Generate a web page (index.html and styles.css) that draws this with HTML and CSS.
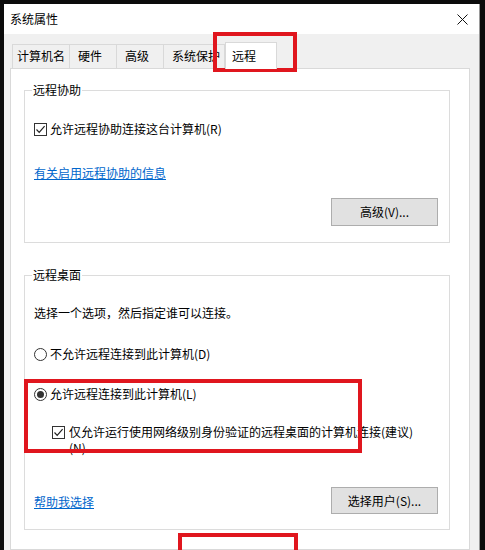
FILE: index.html
```html
<!DOCTYPE html>
<html lang="zh-CN">
<head>
<meta charset="utf-8">
<title>系统属性</title>
<link rel="stylesheet" href="styles.css">
</head>
<body>
<div class="window">
  <div class="titlebar">
    <span class="title">系统属性</span>
    <svg class="close" width="11" height="11" viewBox="0 0 11 11"><path d="M0.5 0.5 L10.5 10.5 M10.5 0.5 L0.5 10.5" stroke="#111" stroke-width="1" fill="none"/></svg>
  </div>
  <div class="dialog">
    <div class="tabs">
      <div class="tab tab-first">计算机名</div>
      <div class="tab">硬件</div>
      <div class="tab">高级</div>
      <div class="tab tab-wide">系统保护</div>
      <div class="tab tab-active">远程</div>
    </div>
    <div class="panel">
      <fieldset class="group group-assist">
        <legend>远程协助</legend>
        <div class="group-body">
          <label class="option option-first">
            <span class="checkbox"><svg width="11" height="11" viewBox="0 0 11 11"><path d="M1.5 5.5 L4.2 8.3 L9.6 2.2" stroke="#222" stroke-width="1.2" fill="none"/></svg></span>
            <span>允许远程协助连接这台计算机(R)</span>
          </label>
          <a class="link link-assist" href="#">有关启用远程协助的信息</a>
          <div class="btn-row">
            <button class="btn btn-tall">高级(V)...</button>
          </div>
        </div>
      </fieldset>
      <fieldset class="group group-desktop">
        <legend>远程桌面</legend>
        <div class="group-body">
          <p class="hint">选择一个选项，然后指定谁可以连接。</p>
          <label class="option option-radio1">
            <span class="radio"></span>
            <span>不允许远程连接到此计算机(D)</span>
          </label>
          <label class="option option-radio2">
            <span class="radio radio-on"><span class="dot"></span></span>
            <span>允许远程连接到此计算机(L)</span>
          </label>
          <label class="option option-nla">
            <span class="checkbox"><svg width="11" height="11" viewBox="0 0 11 11"><path d="M1.5 5.5 L4.2 8.3 L9.6 2.2" stroke="#222" stroke-width="1.2" fill="none"/></svg></span>
            <span class="nla-text">仅允许运行使用网络级别身份验证的远程桌面的计算机连接(建议)(N)</span>
          </label>
          <div class="footer-row">
            <a class="link link-help" href="#">帮助我选择</a>
            <button class="btn">选择用户(S)...</button>
          </div>
        </div>
      </fieldset>
    </div>
  </div>
</div>
<div class="mark mark-tab"></div>
<div class="mark mark-allow"></div>
<div class="mark mark-bottom"></div>
</body>
</html>
```
FILE: styles.css
```css
html, body {
  margin: 0;
  padding: 0;
}
body {
  background: #0b0b0b;
  height: 550px;
  overflow: hidden;
  position: relative;
  font-family: "Noto Sans CJK SC", "Microsoft YaHei", sans-serif;
  font-size: 12px;
  color: #000;
}
.window {
  margin: 4px 0 0 4px;
  width: 475px;
  height: 546px;
  overflow: hidden;
  border-right: 1px solid #9a9a9a;
  background: #f0f0f0;
}
.titlebar {
  height: 30px;
  background: #fff;
  display: flex;
  align-items: center;
  justify-content: space-between;
  padding: 0 11px 0 6px;
}
.title {
  line-height: 16px;
}
.close {
  display: block;
}
.dialog {
  padding: 10px 9px 0 6px;
}
.tabs {
  display: flex;
  align-items: flex-end;
  height: 24px;
  margin-left: 2px;
}
.tab {
  height: 24px;
  box-sizing: border-box;
  padding: 3px 14px 0 8px;
  line-height: 16px;
  border-top: 1px solid #d9d9d9;
  border-right: 1px solid #d9d9d9;
  background: #f0f0f0;
  white-space: nowrap;
}
.tab-first {
  border-left: 1px solid #d9d9d9;
  padding: 3px 4px 0 4px;
}
.tab-wide {
  padding-right: 4px;
}
.tab-active {
  height: 27px;
  margin-bottom: -1px;
  padding: 5px 20px 0 6px;
  background: #fff;
  border-left: 1px solid #d9d9d9;
  position: relative;
  z-index: 1;
}
.panel {
  border: 1px solid #d9d9d9;
  background: #fff;
  padding: 0 19px 0 13px;
  height: 480px;
}
.group {
  margin: 0;
  border: 1px solid #dcdcdc;
  padding: 0 11px 0 9px;
  min-width: 0;
}
.group legend {
  padding: 0 1px;
  margin-left: -2px;
  line-height: 16px;
}
.group-assist {
  margin-top: 13px;
  padding-bottom: 16px;
}
.group-desktop {
  margin-top: 24px;
  padding-bottom: 15px;
}
.group-body {
  display: flex;
  flex-direction: column;
  align-items: flex-start;
}
.option {
  display: flex;
  align-items: center;
  gap: 3px;
  line-height: 16px;
}
.option-first {
  margin-top: 23px;
}
.checkbox {
  width: 11px;
  height: 11px;
  border: 1px solid #333;
  background: #fff;
  display: flex;
  flex: none;
}
.radio {
  width: 11px;
  height: 11px;
  border: 1px solid #333;
  border-radius: 50%;
  background: #fff;
  display: flex;
  align-items: center;
  justify-content: center;
  flex: none;
}
.dot {
  width: 7px;
  height: 7px;
  border-radius: 50%;
  background: #333;
}
.link {
  color: #0066cc;
  text-decoration: underline;
  line-height: 16px;
}
.link-assist {
  margin-top: 28px;
}
.btn-row {
  align-self: stretch;
  display: flex;
  justify-content: flex-end;
  margin-top: 17px;
}
.btn {
  font: inherit;
  color: #000;
  width: 107px;
  height: 27px;
  background: #e1e1e1;
  border: 1px solid #adadad;
  padding: 0;
  line-height: 16px;
}
.btn-tall {
  height: 28px;
}
.hint {
  margin: 22px 0 0;
  line-height: 16px;
}
.option-radio1 {
  margin-top: 25px;
}
.option-radio2 {
  margin-top: 24px;
}
.option-nla {
  margin-top: 22px;
  margin-left: 18px;
  align-items: flex-start;
}
.option-nla .checkbox {
  margin-top: 2px;
}
.nla-text {
  width: 352px;
  padding-left: 1px;
}
.footer-row {
  align-self: stretch;
  display: flex;
  justify-content: space-between;
  align-items: center;
  margin-top: 31px;
}
.link-help {
  padding-top: 3px;
}
.mark {
  position: absolute;
  border: 4px solid #e0161e;
  box-sizing: border-box;
}
.mark-tab {
  left: 213px;
  top: 32px;
  width: 84px;
  height: 40px;
}
.mark-allow {
  left: 24px;
  top: 379px;
  width: 338px;
  height: 74px;
}
.mark-bottom {
  left: 178px;
  top: 533px;
  width: 120px;
  height: 17px;
  border-bottom: 0;
}
```
